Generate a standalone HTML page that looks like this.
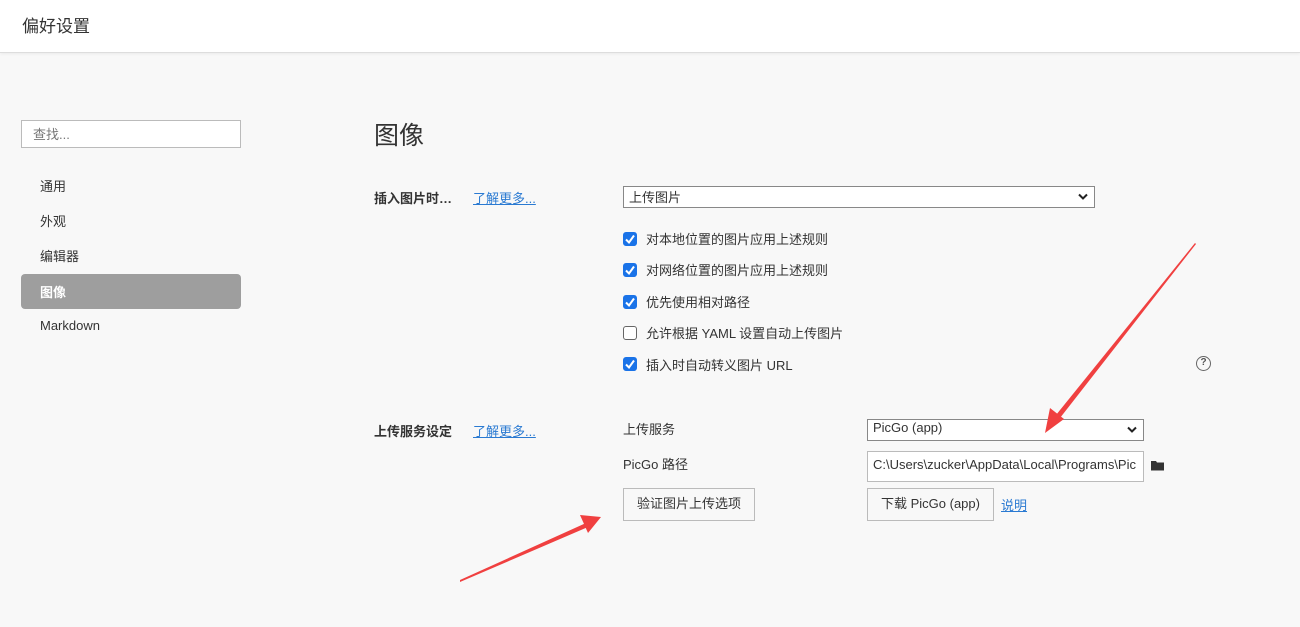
<!DOCTYPE html>
<html><head><meta charset="utf-8"><style>
*{margin:0;padding:0;box-sizing:border-box}
body{width:1300px;height:627px;background:#f8f8f8;font-family:"Liberation Sans","Noto Sans CJK SC",sans-serif;color:#333;position:relative;overflow:hidden;font-size:13px}
.hdr{position:absolute;left:0;top:0;width:1300px;height:53px;background:#fff;border-bottom:1px solid #ddd;box-shadow:0 1px 3px rgba(0,0,0,.06)}
.hdr span{position:absolute;left:22px;top:12px;font-size:17px;color:#333}
.a{position:absolute;white-space:nowrap}
.search{left:21px;top:120px;width:220px;height:28px;border:1px solid #bbb;background:#fff;color:#777;padding:3px 11px;font-size:13px}
.nav{left:40px;font-size:13px;color:#333}
.sel{left:21px;top:274px;width:220px;height:35px;background:#9e9e9e;border-radius:4px}
.box{position:absolute;background:#fff;border:1px solid #888;height:22px;padding:0 5px;font-size:13px;color:#333;overflow:hidden;white-space:nowrap}
.chev{position:absolute;right:6px;top:6px}
.cb{position:absolute;left:623px;width:14px;height:14px;border-radius:3px;background:#1a73e8}
.cb.off{background:#fff;border:1px solid #666}
.lbl{position:absolute;left:646px;font-size:13px;color:#333;white-space:nowrap}
.link{color:#2a7ad2;text-decoration:underline}
.btn{position:absolute;background:#f8f8f8;border:1px solid #bbb;height:33px;font-size:13px;color:#333;text-align:center;line-height:29px}
</style></head><body>
<div class="hdr"><span>偏好设置</span></div>
<div class="a search">查找...</div>
<div class="a sel"></div>
<div class="a nav" style="top:176px">通用</div>
<div class="a nav" style="top:211px">外观</div>
<div class="a nav" style="top:246px">编辑器</div>
<div class="a nav" style="top:282px;color:#fff;font-weight:bold">图像</div>
<div class="a nav" style="top:318px">Markdown</div>
<div class="a" style="left:374px;top:116px;font-size:25px;color:#333">图像</div>
<div class="a" style="left:374px;top:188px;font-weight:bold">插入图片时…</div>
<div class="a link" style="left:473px;top:188px">了解更多...</div>
<div class="box" style="left:623px;top:186px;width:472px">上传图片<svg class="chev" width="10" height="8"><polyline points="1,1.5 5,5.5 9,1.5" fill="none" stroke="#222" stroke-width="2"/></svg></div>
<svg width="0" height="0" style="position:absolute"><defs><symbol id="ck" viewBox="0 0 14 14"><polyline points="3,7.5 6,10.5 11,3.5" fill="none" stroke="#fff" stroke-width="2"/></symbol></defs></svg>
<div class="cb" style="top:232px"><svg width="14" height="14"><use href="#ck"/></svg></div><div class="lbl" style="top:229px">对本地位置的图片应用上述规则</div>
<div class="cb" style="top:263px"><svg width="14" height="14"><use href="#ck"/></svg></div><div class="lbl" style="top:260px">对网络位置的图片应用上述规则</div>
<div class="cb" style="top:295px"><svg width="14" height="14"><use href="#ck"/></svg></div><div class="lbl" style="top:292px">优先使用相对路径</div>
<div class="cb off" style="top:326px"></div><div class="lbl" style="top:323px">允许根据 YAML 设置自动上传图片</div>
<div class="cb" style="top:357px"><svg width="14" height="14"><use href="#ck"/></svg></div><div class="lbl" style="top:355px">插入时自动转义图片 URL</div>
<div class="a" style="left:1196px;top:356px;width:15px;height:15px;border:1.5px solid #666;border-radius:50%;font-size:10px;text-align:center;line-height:12px;color:#555;font-weight:bold">?</div>
<div class="a" style="left:374px;top:421px;font-weight:bold">上传服务设定</div>
<div class="a link" style="left:473px;top:421px">了解更多...</div>
<div class="a" style="left:623px;top:419px">上传服务</div>
<div class="box" style="left:867px;top:419px;width:277px">PicGo (app)<svg class="chev" width="10" height="8"><polyline points="1,1.5 5,5.5 9,1.5" fill="none" stroke="#222" stroke-width="2"/></svg></div>
<div class="a" style="left:623px;top:454px">PicGo 路径</div>
<div class="box" style="left:867px;top:451px;width:277px;height:31px;border-color:#bbb;padding-top:5px">C:\Users\zucker\AppData\Local\Programs\Pic</div>
<svg class="a" style="left:1151px;top:460px" width="14" height="11"><path d="M0 1h5l1 1.5h7v8H0z" fill="#333"/></svg>
<div class="btn" style="left:623px;top:488px;width:132px">验证图片上传选项</div>
<div class="btn" style="left:867px;top:488px;width:127px">下载 PicGo (app)</div>
<div class="a link" style="left:1001px;top:495px">说明</div>
<svg class="a" style="left:0;top:0" width="1300" height="627">
<polygon points="1195,243 1196,244 1060,418 1056,415" fill="#f04040"/>
<polygon points="1045,433 1050,408 1064,419" fill="#f04040"/>
<polygon points="460,580 460,582 588,527 586,523" fill="#f04040"/>
<polygon points="601,517 580,515 588,533" fill="#f04040"/>
</svg>
</body></html>
